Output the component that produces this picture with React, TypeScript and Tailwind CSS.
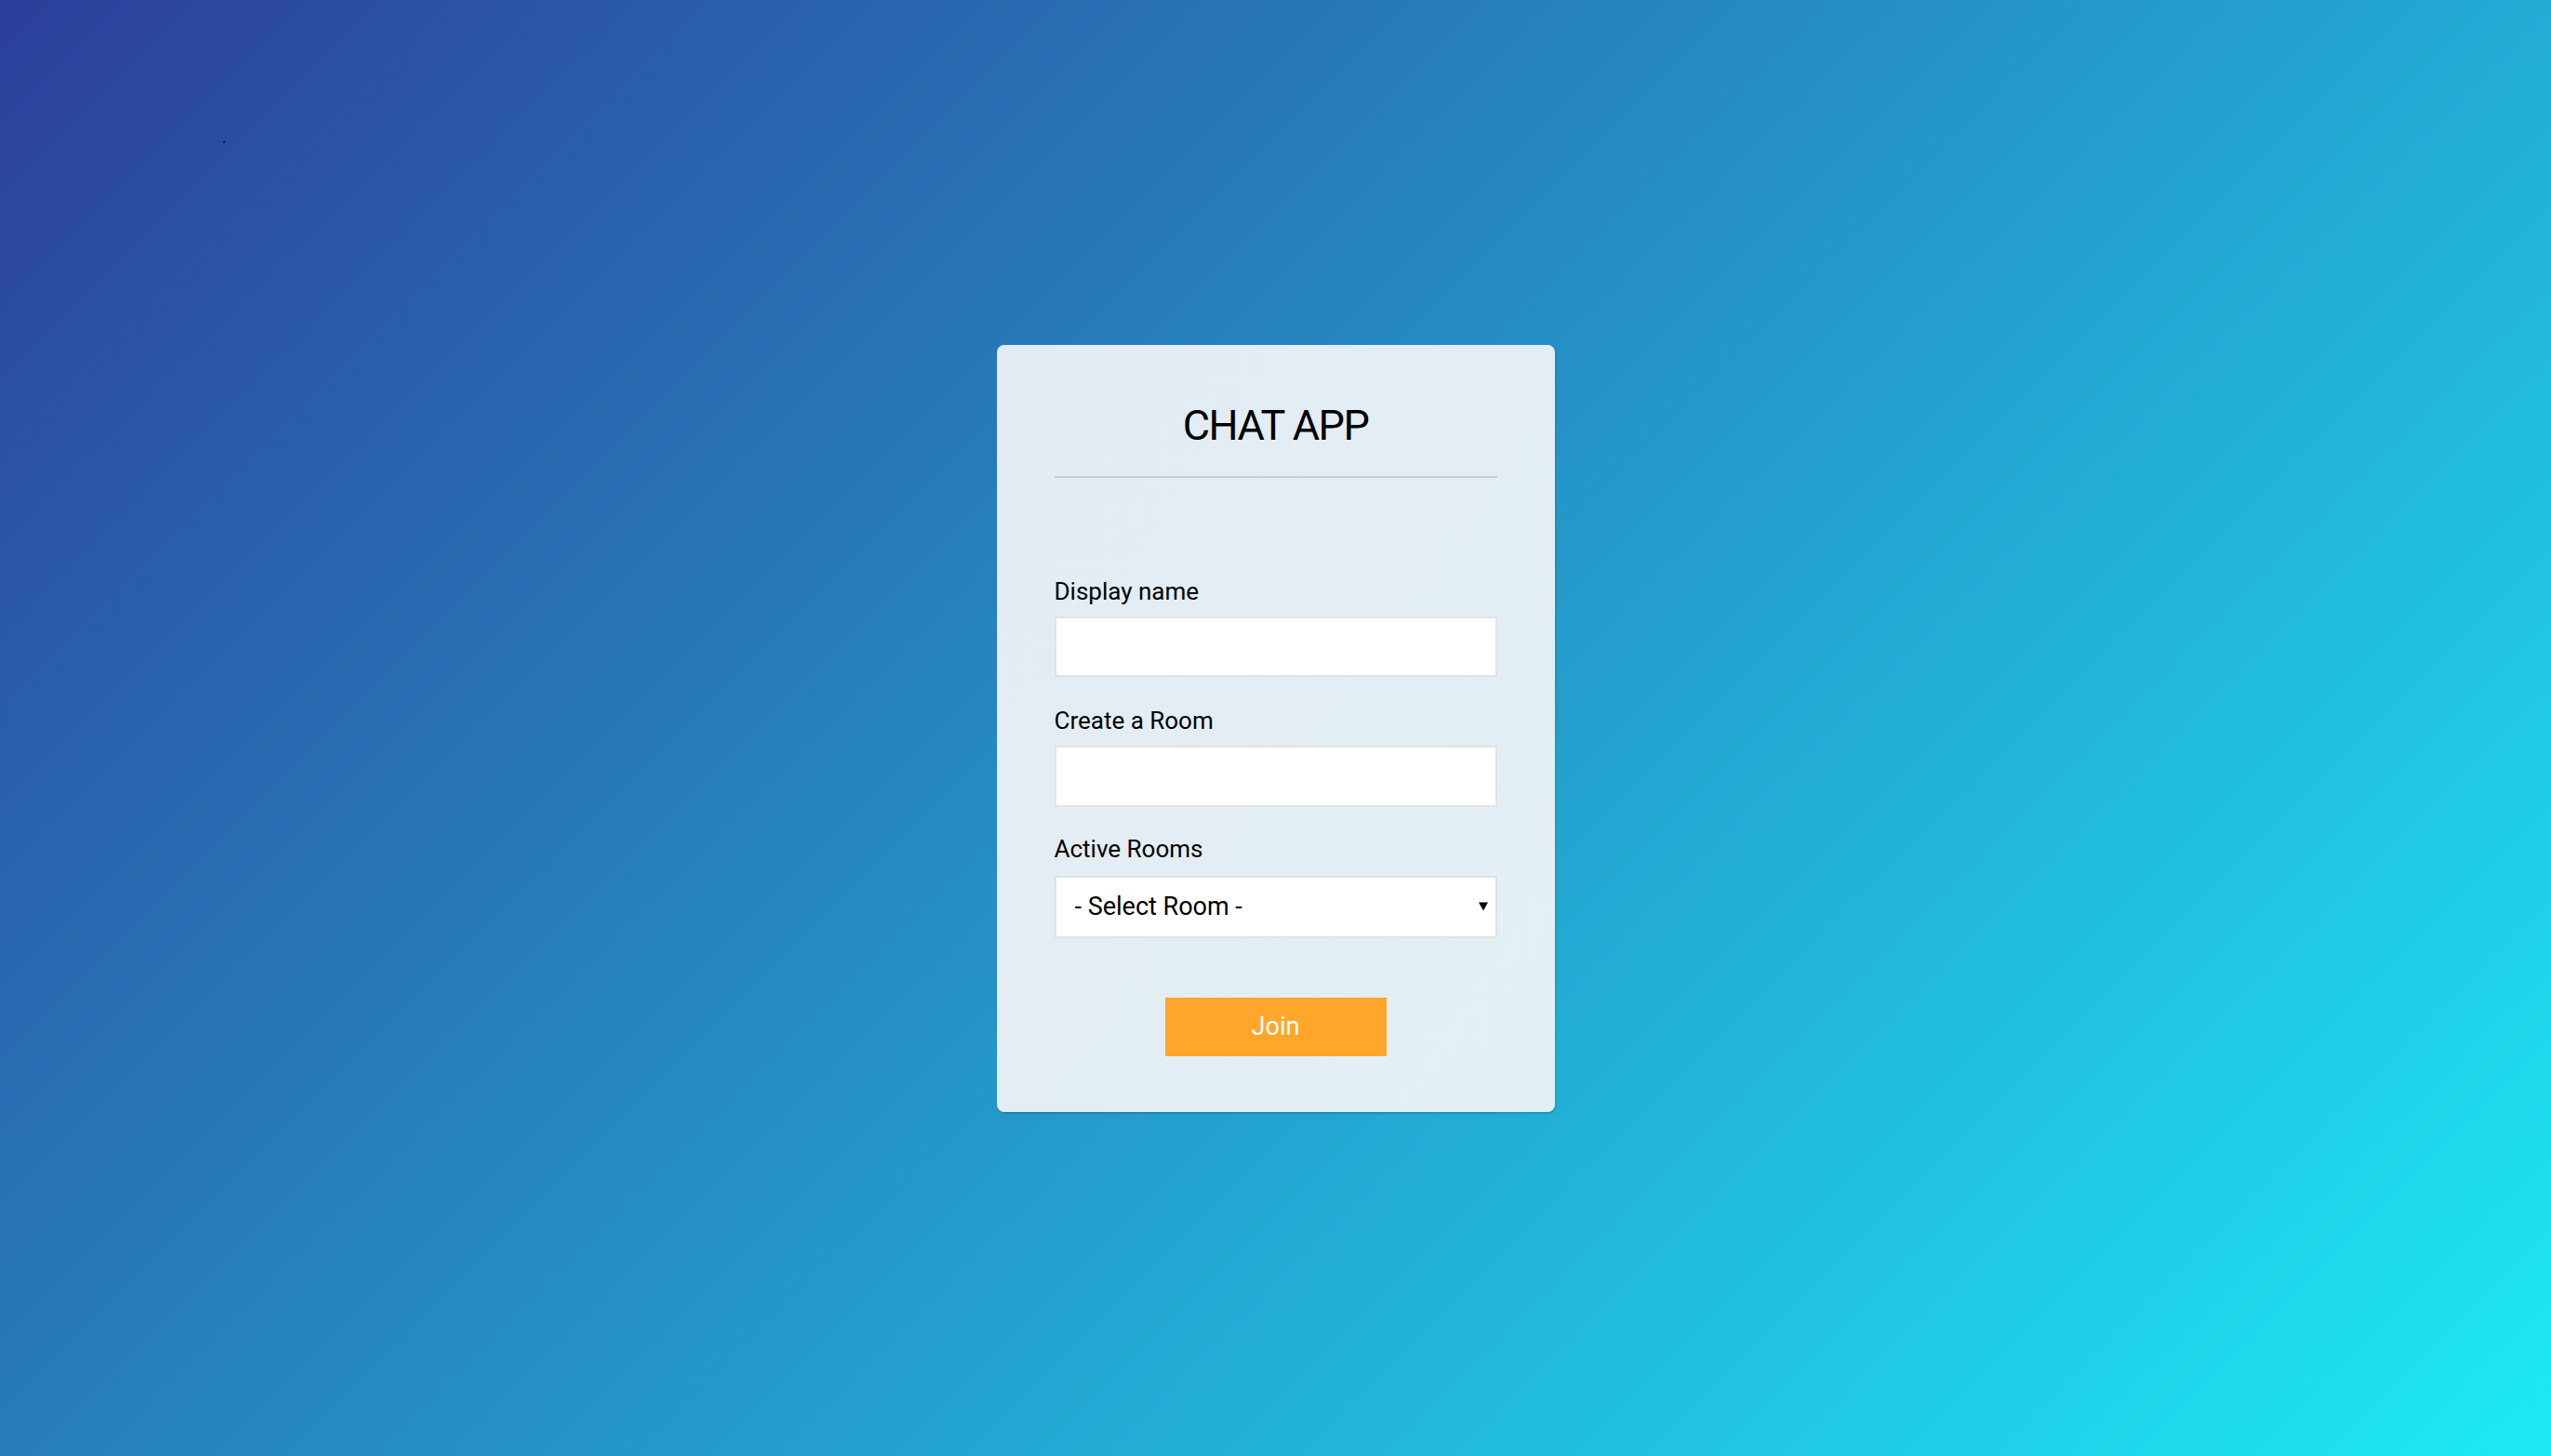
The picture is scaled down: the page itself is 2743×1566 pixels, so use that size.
import React from 'react';

const rooms = ['General', 'Random', 'Tech'];

export default function App() {
  return (
    <main className="relative h-screen w-full flex items-center justify-center bg-[linear-gradient(135deg,#2c3e99,#1de9f5)] font-['Roboto',sans-serif] text-black">
      {/* stray dot in the top left */}
      <span className="absolute left-[240px] top-[152px] w-[2px] h-[2px] bg-[#111]" />

      <div className="w-[600px] rounded-lg bg-linear-to-br from-[#e4ebf3] to-[#e2f0f4] shadow-[1px_2px_2px_rgba(0,0,0,0.15)] px-[62px] pt-[60px] pb-[60px]">
        <h1 className="text-center text-[45px] leading-[54px] tracking-[-1.5px] font-normal pb-[27px] border-b-2 border-[#c9cccf]">
          CHAT APP
        </h1>

        <form className="mt-[108px] flex flex-col" onSubmit={(e) => e.preventDefault()}>
          <label className="block text-[26px] leading-[28px] mb-[13px]">Display name</label>
          <input type="text" className="h-[65px] w-full bg-white border-2 border-[#e1e3e4] px-5 text-[26px] outline-none" />

          <label className="block text-[26px] leading-[28px] mt-[33px] mb-[13px]">Create a Room</label>
          <input type="text" className="h-[66px] w-full bg-white border-2 border-[#e1e3e4] px-5 text-[26px] outline-none" />

          <label className="block text-[26px] leading-[28px] mt-[31px] mb-[15px]">Active Rooms</label>
          <div className="relative">
            <select
              defaultValue=""
              className="appearance-none h-[67px] w-full bg-white border-2 border-[#e1e3e4] pl-5 pr-10 text-[27px] outline-none rounded-none"
            >
              <option value="">- Select Room -</option>
              {rooms.map((r) => (
                <option key={r} value={r}>{r}</option>
              ))}
            </select>
            <span className="pointer-events-none absolute right-[10px] top-1/2 -translate-y-1/2 w-0 h-0 border-l-[5px] border-r-[5px] border-t-[9px] border-l-transparent border-r-transparent border-t-black" />
          </div>

          <div className="mt-[64px] flex justify-center">
            <button type="submit" className="w-[238px] h-[63px] bg-[#ffa62b] text-white text-[27px]">
              Join
            </button>
          </div>
        </form>
      </div>
    </main>
  );
}
